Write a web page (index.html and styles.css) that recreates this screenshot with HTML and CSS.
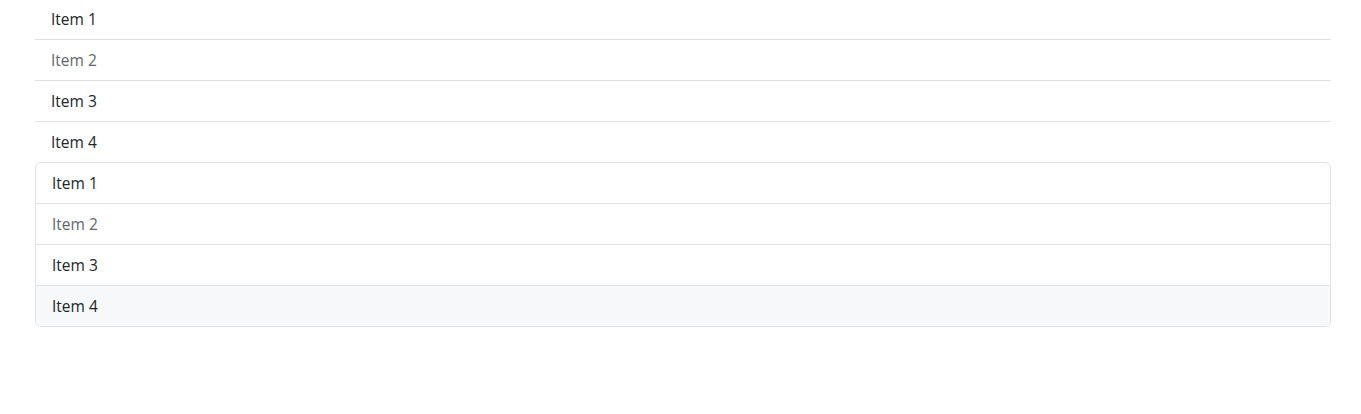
FILE: index.html
```html
<!DOCTYPE html>
<html>
<head>
<meta charset="utf-8">
<link rel="stylesheet" href="styles.css">
</head>
<body>
<div class="container">
  <ul class="list-group flush">
    <li class="item">Item 1</li>
    <li class="item muted">Item 2</li>
    <li class="item">Item 3</li>
    <li class="item">Item 4</li>
  </ul>
  <ul class="list-group boxed">
    <li class="item">Item 1</li>
    <li class="item muted">Item 2</li>
    <li class="item">Item 3</li>
    <li class="item light">Item 4</li>
  </ul>
</div>
</body>
</html>
```
FILE: styles.css
```css
html, body {
  margin: 0;
  padding: 0;
  background: #fff;
}
body {
  font-family: "Open Sans", "Noto Sans", sans-serif;
  font-size: 15.5px;
  color: #212529;
}
.container {
  width: 1296px;
  margin: -1px 0 0 35px;
}
.list-group {
  list-style: none;
  margin: 0;
  padding: 0;
  display: flex;
  flex-direction: column;
}
.item {
  padding: 8px 16px;
  line-height: 24px;
  border-bottom: 1px solid #dee2e6;
}
.flush .item:last-child {
  border-bottom: 0;
}
.boxed {
  border: 1px solid #dee2e6;
  border-radius: 6px;
  overflow: hidden;
}
.boxed .item:last-child {
  border-bottom: 0;
}
.muted {
  color: #60676e;
}
.light {
  background: #f7f8fa;
}
```
